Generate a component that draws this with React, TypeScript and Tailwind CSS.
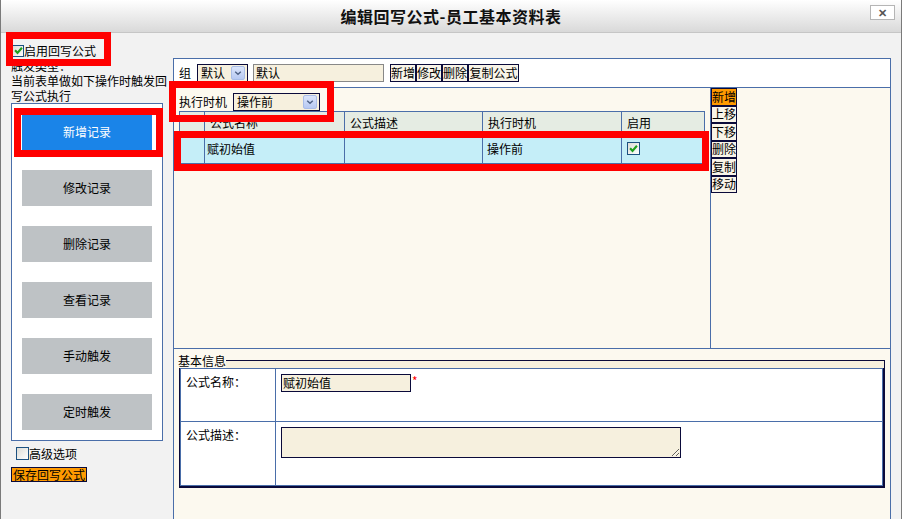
import React from 'react'

// 编辑回写公式 dialog – static mock

const blueLine = 'border-[#4a6ea9]'

function CheckBox({ checked, size = 12 }: { checked?: boolean; size?: number }) {
    return (
        <span
            className="inline-flex items-center justify-center border border-[#1c5180] bg-gradient-to-br from-[#dcdcd6] to-white flex-none"
            style={{ width: size, height: size }}
        >
            {checked && (
                <svg viewBox="0 0 10 10" className="w-[9px] h-[9px]">
                    <path d="M1.2 4.8 L3.9 7.6 L8.8 2" fill="none" stroke="#1ea01e" strokeWidth="2.4" />
                </svg>
            )}
        </span>
    )
}

function SelectBox({ text, width }: { text: string; width: number }) {
    return (
        <div
            className="h-[18px] border border-[#0a0a3a] bg-[#f6f0de] flex items-center pl-[3px] pr-[2px] flex-none"
            style={{ width }}
        >
            <span className="flex-1 leading-[16px]">{text}</span>
            <span className="w-[14px] h-[14px] rounded-[2px] bg-gradient-to-b from-[#dbe5fb] to-[#b7c9f2] border border-[#a9bde8] flex items-center justify-center">
                <svg viewBox="0 0 10 10" className="w-[8px] h-[8px]">
                    <path d="M1.5 3.5 L5 6.5 L8.5 3.5" fill="none" stroke="#4d6185" strokeWidth="1.8" />
                </svg>
            </span>
        </div>
    )
}

function ToolBtn({ label, width }: { label: string; width: number }) {
    return (
        <div
            className="h-[18px] border border-[#0a0a3a] bg-[#f8f4e8] flex items-center justify-center leading-[16px] flex-none"
            style={{ width }}
        >
            {label}
        </div>
    )
}

function RedMark({ className }: { className: string }) {
    return <div className={`absolute border-[7px] border-[#ff0000] pointer-events-none ${className}`} />
}

const triggerButtons = ['修改记录', '删除记录', '查看记录', '手动触发', '定时触发']
const sideButtons = ['上移', '下移', '删除', '复制', '移动']

export default function App() {
    return (
        <div className="relative w-[902px] h-[519px] overflow-hidden bg-[#f2f2f2] border-l border-r border-[#7a7a7a] font-['Noto_Sans_CJK_SC',sans-serif] text-[12px] text-black">
            {/* title bar */}
            <div className="relative h-[33px] border-b border-[#c6c6c6] bg-gradient-to-b from-white to-[#d9d9d9] flex items-center justify-center">
                <span className="text-[16px] font-bold tracking-[0.5px] text-[#111]">编辑回写公式-员工基本资料表</span>
                <div className="absolute right-[6px] top-[5px] w-[25px] h-[15px] bg-white border border-[#b5b5b5] flex items-center justify-center text-[11px] font-bold text-[#555] leading-none">
                    ✕
                </div>
            </div>

            <div className="flex h-[486px]">
                {/* left column */}
                <div className="w-[172px] flex-none pl-[10px] pt-[10px]">
                    <div className="flex items-center h-[15px] pl-[1px]">
                        <CheckBox checked />
                        <span className="leading-[15px]">启用回写公式</span>
                    </div>
                    <div className="leading-[15px] overflow-hidden">
                        <div className="h-[15px]">触发类型：</div>
                        <div className="h-[15px] whitespace-nowrap">当前表单做如下操作时触发回</div>
                        <div className="h-[15px]">写公式执行</div>
                    </div>
                    <div className={`w-[152px] h-[338px] border ${blueLine} bg-white pl-[10px] pt-[10px] flex flex-col gap-[20px]`}>
                        <div className="w-[130px] h-[36px] bg-[#1a84e8] text-white flex items-center justify-center text-[12px]">
                            新增记录
                        </div>
                        {triggerButtons.map((b) => (
                            <div key={b} className="w-[130px] h-[36px] bg-[#bec2c5] flex items-center justify-center">
                                {b}
                            </div>
                        ))}
                    </div>
                    <div className="flex items-center h-[15px] mt-[5px] pl-[5px]">
                        <CheckBox size={13} />
                        <span className="leading-[15px]">高级选项</span>
                    </div>
                    <div className="mt-[6px] inline-block border border-[#0a0a3a] bg-[#ff9a00] leading-[13px] px-[1px]">
                        保存回写公式
                    </div>
                </div>

                {/* right panel */}
                <div className={`mt-[25px] w-[718px] flex-none border-t border-l border-r ${blueLine} bg-[#fcf9ef] flex flex-col`}>
                    {/* group row */}
                    <div className={`h-[29px] flex-none bg-white border-b ${blueLine} flex items-center pl-[5px]`}>
                        <span className="leading-[16px]">组</span>
                        <div className="ml-[6px]">
                            <SelectBox text="默认" width={51} />
                        </div>
                        <div className="ml-[5px] w-[131px] h-[18px] border border-[#888] bg-[#f6f0de] leading-[16px] pl-[2px]">默认</div>
                        <div className="ml-[6px] flex">
                            <ToolBtn label="新增" width={26} />
                            <ToolBtn label="修改" width={26} />
                            <ToolBtn label="删除" width={26} />
                            <ToolBtn label="复制公式" width={51} />
                        </div>
                    </div>

                    {/* list area */}
                    <div className={`h-[261px] flex-none flex border-b ${blueLine}`}>
                        <div className={`w-[537px] flex-none border-r ${blueLine} pl-[5px] pt-[5px]`}>
                            <div className="flex items-center h-[18px]">
                                <span className="w-[54px] leading-[16px]">执行时机</span>
                                <SelectBox text="操作前" width={87} />
                            </div>
                            <div className={`w-[526px] grid grid-cols-[25px_140px_138px_139px_83px] border-t border-l ${blueLine}`}>
                                {['', '公式名称', '公式描述', '执行时机', '启用'].map((h, i) => (
                                    <div key={i} className={`h-[22px] bg-[#e5ece3] border-r border-b ${blueLine} flex items-center pl-[5px]`}>
                                        {h}
                                    </div>
                                ))}
                                <div className={`h-[30px] bg-[#c5eef8] border-r border-b ${blueLine}`} />
                                <div className={`h-[30px] bg-[#c5eef8] border-r border-b ${blueLine} flex items-center pl-[2px]`}>赋初始值</div>
                                <div className={`h-[30px] bg-[#c5eef8] border-r border-b ${blueLine}`} />
                                <div className={`h-[30px] bg-[#c5eef8] border-r border-b ${blueLine} flex items-center pl-[4px]`}>操作前</div>
                                <div className={`h-[30px] bg-[#c5eef8] border-r border-b ${blueLine} flex items-center pl-[5px]`}>
                                    <CheckBox checked size={13} />
                                </div>
                            </div>
                        </div>
                        <div className="flex flex-col">
                            <div className="w-[26px] h-[17.5px] border border-[#0a0a3a] bg-[#ff9a00] flex items-center justify-center leading-none">新增</div>
                            {sideButtons.map((b) => (
                                <div key={b} className="w-[26px] h-[17.5px] border border-[#0a0a3a] bg-[#f8f4e8] flex items-center justify-center leading-none">
                                    {b}
                                </div>
                            ))}
                        </div>
                    </div>

                    {/* basic info fieldset */}
                    <div className="ml-[4px] mt-[5px] w-[708px]">
                        <div className="flex h-[14px]">
                            <span className="leading-[14px]">基本信息</span>
                            <div className="flex-1 mt-[6px] border-t border-r border-[#0a0a3a] bg-[#f6f0de] mr-[1px]" />
                        </div>
                        <div className="ml-[1px] w-[706px] h-[120px] border-l border-r-2 border-b-2 border-[#0a0a3a]">
                            <div className={`h-full border ${blueLine} bg-white grid grid-cols-[95px_1fr] grid-rows-[53px_1fr]`}>
                                <div className={`border-r border-b ${blueLine} pl-[5px] pt-[6px] leading-[14px]`}>公式名称：</div>
                                <div className={`border-b ${blueLine} pl-[5px] pt-[5px] flex items-start`}>
                                    <div className="w-[130px] h-[18px] border border-[#0a0a3a] bg-[#f6f0de] leading-[16px] pl-[1px]">赋初始值</div>
                                    <span className="text-[#ff0000] leading-[14px] ml-[1px]">*</span>
                                </div>
                                <div className={`border-r ${blueLine} pl-[5px] pt-[6px] leading-[14px]`}>公式描述：</div>
                                <div className="pl-[5px] pt-[5px]">
                                    <textarea
                                        readOnly
                                        className="block w-[400px] h-[31px] border border-[#0a0a3a] bg-[#f6f0de] outline-none"
                                    />
                                </div>
                            </div>
                        </div>
                    </div>
                </div>
            </div>

            {/* annotation boxes */}
            <RedMark className="left-[5px] top-[32px] w-[105px] h-[34px] border-[6px]" />
            <RedMark className="left-[13px] top-[108px] w-[149px] h-[49px]" />
            <RedMark className="left-[168px] top-[81px] w-[165px] h-[41px]" />
            <RedMark className="left-[173px] top-[131px] w-[535px] h-[40px]" />
        </div>
    )
}
